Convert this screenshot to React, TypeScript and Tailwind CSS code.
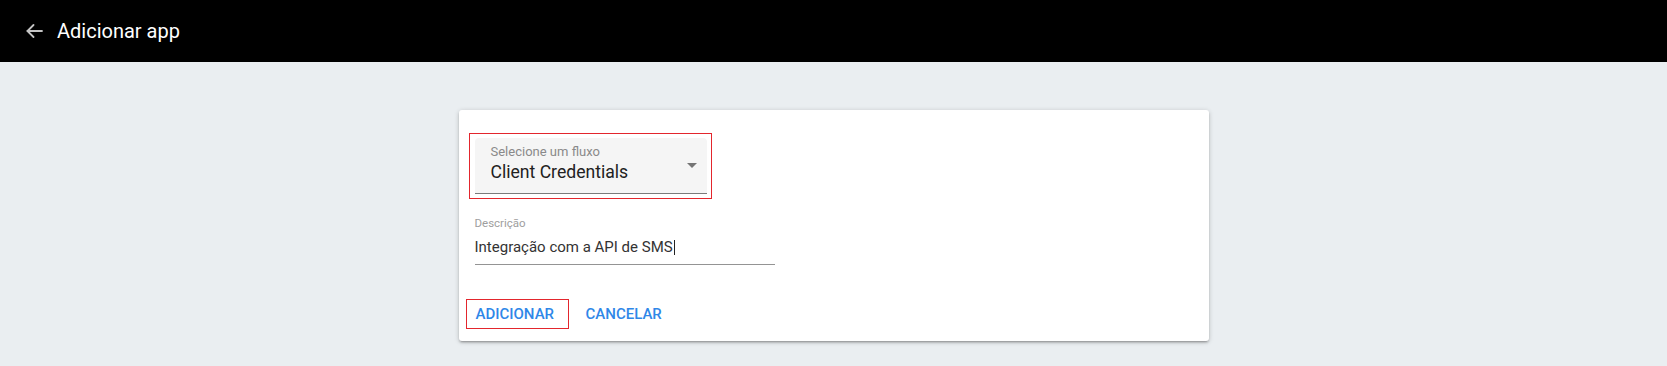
import React from "react";

export default function App() {
  return (
    <div
      className="w-full min-h-[366px] bg-[#eaeef1]"
      style={{ fontFamily: "Roboto, 'Liberation Sans', sans-serif" }}
    >
      <header className="h-[62px] bg-black flex items-center">
        <svg
          width="17"
          height="14"
          viewBox="0 0 17 14"
          className="ml-[26px] mt-[-1px]"
          fill="none"
          stroke="#c4c4c4"
          strokeWidth="1.8"
          strokeLinecap="round"
          strokeLinejoin="round"
        >
          <path d="M16 7H1.5" />
          <path d="M7.5 1L1.5 7L7.5 13" />
        </svg>
        <h1 className="ml-[14px] text-[20px] leading-[28px] text-white font-normal">
          Adicionar app
        </h1>
      </header>

      <div className="mx-auto mt-[48px] w-[750px] bg-white rounded-[3px] shadow-[0_1px_5px_rgba(0,0,0,0.2),0_2px_2px_rgba(0,0,0,0.14),0_3px_1px_-2px_rgba(0,0,0,0.12)] pt-[23px] pb-[12px]">
        <div className="ml-[10px] inline-flex border border-[#e3262d] pt-[4px] pr-[4px] pb-[4px] pl-[5px]">
          <div className="w-[232px] h-[56px] bg-[#f5f5f5] rounded-t-[4px] border-b border-[#7a7a7a] flex items-center justify-between">
            <div className="self-start pt-[5px] pl-[16px] flex flex-col">
              <span className="text-[13px] leading-[17px] text-[#8a8a8a]">
                Selecione um fluxo
              </span>
              <span className="text-[17.6px] leading-[24px] text-[#212121]">
                Client Credentials
              </span>
            </div>
            <div className="mr-[10px] w-0 h-0 border-l-[5px] border-r-[5px] border-t-[5px] border-l-transparent border-r-transparent border-t-[#757575]" />
          </div>
        </div>

        <div className="ml-[16px] mt-[17px] w-[300px] flex flex-col">
          <span className="text-[11.5px] leading-[14px] text-[#9e9e9e]">Descrição</span>
          <div className="mt-[7px] pb-[7px] border-b border-[#949494] flex items-center">
            <span className="text-[15px] leading-[20px] text-[#333333]">
              Integração com a API de SMS
            </span>
            <span className="ml-[1px] w-[1px] h-[15px] bg-[#222222]" />
          </div>
        </div>

        <div className="mt-[34px] ml-[7px] flex items-center">
          <button className="w-[103px] h-[30px] border border-[#e3262d] pl-[9px] text-left text-[15px] leading-[28px] font-medium text-[#2f87e8]">
            ADICIONAR
          </button>
          <button className="ml-[9px] h-[30px] px-[8px] text-[15px] leading-[30px] font-medium text-[#2f87e8]">
            CANCELAR
          </button>
        </div>
      </div>
    </div>
  );
}
